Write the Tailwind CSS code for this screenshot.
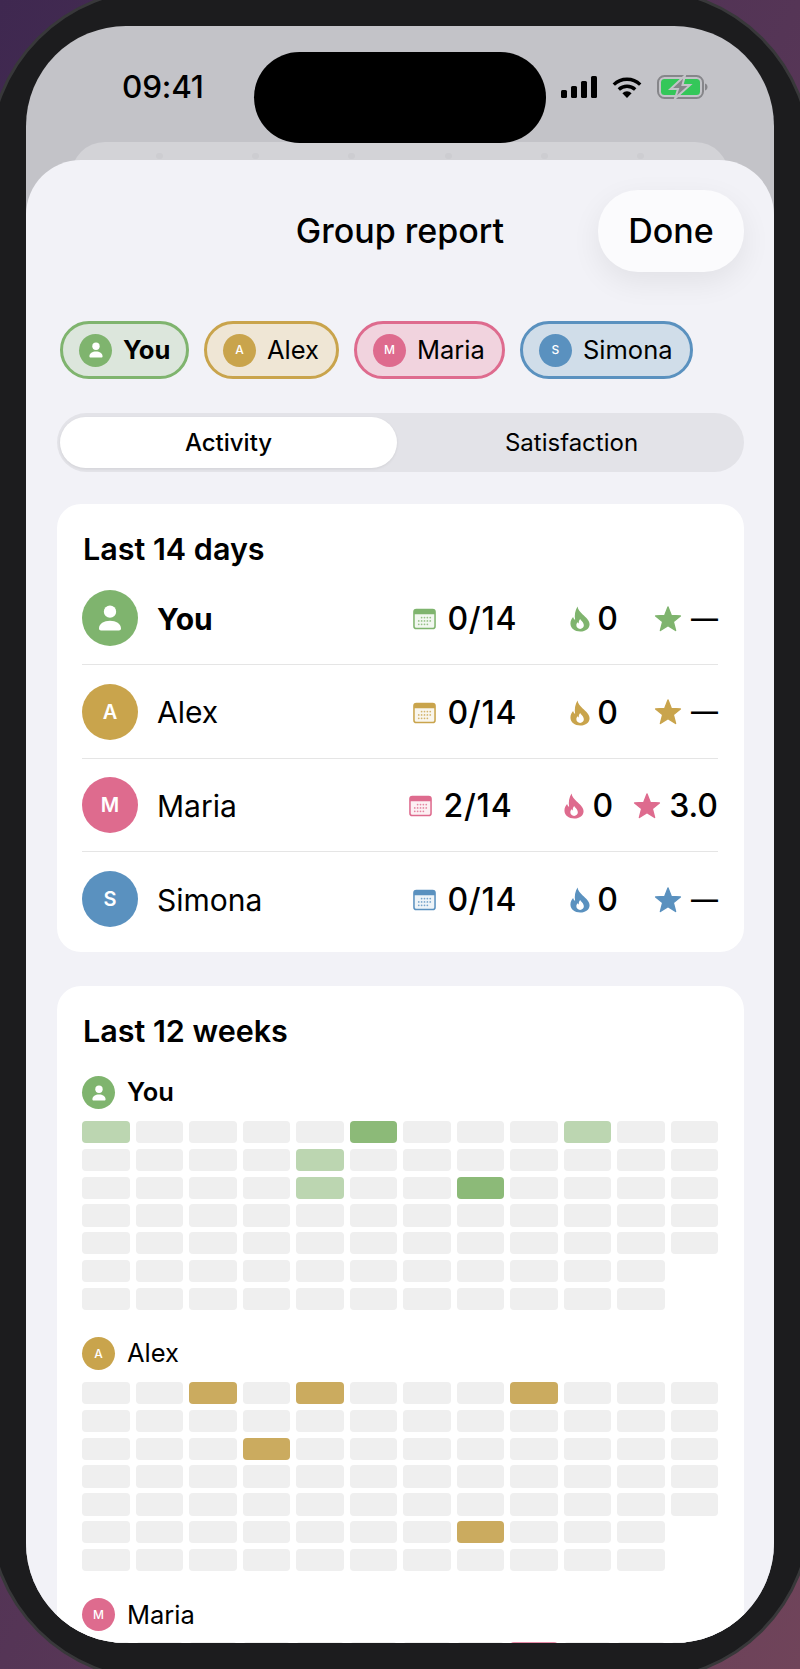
<!DOCTYPE html>
<html lang="en">
<head>
    <meta charset="UTF-8">
    <meta name="viewport" content="width=device-width, initial-scale=1.0">
    <script src="https://cdn.jsdelivr.net/npm/@tailwindcss/browser@4"></script>
    <title>Group report</title>
</head>

<body class="w-[800px] h-[1669px] overflow-hidden bg-linear-to-br from-[#3f2850] via-[#553556] to-[#70445a] font-['Inter','Liberation_Sans',sans-serif] text-black">
    <svg class="hidden">
        <symbol id="person" viewBox="0 0 24 24">
            <circle cx="12" cy="8.2" r="3.7" fill="#fff"></circle>
            <path fill="#fff" d="M5.4 18.3c0-2.900 3-4.700 6.600-4.700s6.600 1.800 6.600 4.700c0 .8-.5 1.200-1.200 1.200H6.600c-.7 0-1.200-.4-1.200-1.200z"></path>
        </symbol>
        <symbol id="calendar" viewBox="0 0 24 22">
            <rect x="1" y="1" width="22" height="20" rx="2.500" fill="currentColor" fill-opacity=".1" stroke="currentColor" stroke-width="1.600"></rect>
            <path fill="currentColor" d="M1 3.500A2.500 2.500 0 0 1 3.500 1h17A2.500 2.500 0 0 1 23 3.500V6H1z"></path>
            <g fill="currentColor" fill-opacity=".8">
                <circle cx="9" cy="9.500" r=".9"></circle><circle cx="12" cy="9.500" r=".9"></circle><circle cx="15" cy="9.500" r=".9"></circle><circle cx="18" cy="9.500" r=".9"></circle>
                <circle cx="6" cy="13" r=".9"></circle><circle cx="9" cy="13" r=".9"></circle><circle cx="12" cy="13" r=".9"></circle><circle cx="15" cy="13" r=".9"></circle><circle cx="18" cy="13" r=".9"></circle>
                <circle cx="6" cy="16.500" r=".9"></circle><circle cx="9" cy="16.500" r=".9"></circle><circle cx="12" cy="16.500" r=".9"></circle><circle cx="15" cy="16.500" r=".9"></circle>
            </g>
        </symbol>
        <symbol id="flame" viewBox="0 0 20 25">
            <path fill="currentColor" d="M7.600.6c.5 3.400 2.500 5.200 5 7.500 3 2.700 6.600 5.600 6.600 9.400 0 4-3.700 7-9 7-5.200 0-9.400-3-9.400-7.700 0-2.800 1.300-4.800 2.600-6.300.3 1.300 1 2.300 1.900 2.800C4.500 9.200 5.400 4 7.600.6z"></path>
            <path fill="#fff" d="M10.200 12.600c.4 1.500 3.500 3 3.500 6 0 2-1.600 3.400-3.600 3.400s-3.600-1.400-3.600-3.400c0-1.300.6-2.200 1.300-2.900.2.500.5.900 1 1.100-.1-1.600.3-3.100 1.400-4.200z"></path>
        </symbol>
        <symbol id="star" viewBox="0 0 28 27">
            <path fill="currentColor" stroke="currentColor" stroke-width="1.400" stroke-linejoin="round" d="M14 1l3.300 8.500 9.100.5-7.100 5.700 2.300 8.800L14 19.600l-7.600 4.900 2.300-8.800L1.600 10l9.100-.5z"></path>
        </symbol>
    </svg>

    <div class="m-[-12px] w-[824px] h-[1693px] rounded-[168px] bg-[#1c1c1e] border-[3px] border-[#38383a] p-[35px]">
        <div class="relative flex flex-col h-[1617px] rounded-[100px] overflow-hidden bg-[#c3c3c8]">
            <!-- dynamic island -->
            <div class="absolute left-[228px] top-[26px] z-10 w-[292px] h-[91px] rounded-[46px] bg-black"></div>

            <div class="flex items-center justify-between h-[116px] shrink-0 pt-[6px] pl-[96px] pr-[66px]">
                <span class="text-[31.500px] font-medium leading-none tracking-[-0.2px]">09:41</span>
                <div class="flex items-center gap-[15px]">
                    <svg width="36" height="22" viewBox="0 0 36 22"><rect x="0" y="14" width="6" height="8" rx="1.500"></rect><rect x="10" y="10" width="6" height="12" rx="1.500"></rect><rect x="20" y="5" width="6" height="17" rx="1.500"></rect><rect x="30" y="0" width="6" height="22" rx="1.500"></rect></svg>
                    <svg width="30" height="21" viewBox="0 0 30 21"><path fill="none" stroke="#000" stroke-width="3.400" d="M1.800 7.600a19 19 0 0 1 26.400 0"></path><path fill="none" stroke="#000" stroke-width="3.400" d="M6.800 12.500a12 12 0 0 1 16.400 0"></path><path d="M15 21l-4.600-4.800a6.600 6.600 0 0 1 9.200 0z"></path></svg>
                    <svg width="51" height="24" viewBox="0 0 51 24">
                        <rect x="1" y="1" width="45" height="22" rx="6.500" fill="none" stroke="#86868a" stroke-width="2"></rect>
                        <rect x="4" y="4" width="39" height="16" rx="3.500" fill="#34c759"></rect>
                        <path d="M48 8.500c1.600.5 2.500 1.800 2.500 3.500s-.9 3-2.500 3.500z" fill="#86868a"></path>
                        <path fill="#86868a" stroke="#c3c3c8" stroke-width="2" d="M28 .5L13.500 14H21l-3 9.500L33 10h-7.500z"></path>
                    </svg>
                </div>
            </div>

            <!-- card peeking behind the sheet -->
            <div class="shrink-0 h-[40px] mx-[45px] -mb-[22px] rounded-t-[34px] bg-[#d3d3d7] flex justify-around px-[40px] pt-[11px]">
                <span class="w-[7px] h-[6px] rounded-full bg-[#cdcdd1]"></span>
                <span class="w-[7px] h-[6px] rounded-full bg-[#cdcdd1]"></span>
                <span class="w-[7px] h-[6px] rounded-full bg-[#cdcdd1]"></span>
                <span class="w-[7px] h-[6px] rounded-full bg-[#cdcdd1]"></span>
                <span class="w-[7px] h-[6px] rounded-full bg-[#cdcdd1]"></span>
                <span class="w-[7px] h-[6px] rounded-full bg-[#cdcdd1]"></span>
            </div>

            <!-- sheet -->
            <div class="relative grow rounded-t-[55px] bg-[#f2f2f7] pt-[30px] pl-[31px] pr-[30px]">
                <div class="relative flex justify-end h-[82px]">
                    <h1 class="absolute inset-0 flex items-center justify-center text-[34px] font-medium pr-[1px] pb-[2px]">Group report</h1>
                    <button class="relative w-[146px] rounded-[40px] bg-[#fbfbfd] shadow-[0_10px_30px_rgba(0,0,0,0.07)] text-[34px] font-medium pb-[2px]">Done</button>
                </div>

                <div class="flex gap-[15px] ml-[3px] mt-[49px]">
                    <div class="flex items-center h-[58px] w-[129px] pl-[16px] gap-[11px] rounded-[29px] border-[3px] border-[#7fb46e] bg-[#dce6dc]">
                        <span class="flex items-center justify-center w-[33px] h-[33px] rounded-full bg-[#7fb46e]"><svg width="24" height="24"><use href="#person"></use></svg></span>
                        <span class="text-[25.500px] font-bold">You</span>
                    </div>
                    <div class="flex items-center h-[58px] w-[135px] pl-[16px] gap-[11px] rounded-[29px] border-[3px] border-[#c9a44c] bg-[#efe6d5]">
                        <span class="flex items-center justify-center w-[33px] h-[33px] rounded-full bg-[#c9a44c] text-white text-[12px] font-medium">A</span>
                        <span class="text-[25.500px]">Alex</span>
                    </div>
                    <div class="flex items-center h-[58px] w-[151px] pl-[16px] gap-[11px] rounded-[29px] border-[3px] border-[#de6b8e] bg-[#f1d3de]">
                        <span class="flex items-center justify-center w-[33px] h-[33px] rounded-full bg-[#de6b8e] text-white text-[12px] font-medium">M</span>
                        <span class="text-[25.500px]">Maria</span>
                    </div>
                    <div class="flex items-center h-[58px] w-[173px] pl-[16px] gap-[11px] rounded-[29px] border-[3px] border-[#5a91bf] bg-[#d0dde9]">
                        <span class="flex items-center justify-center w-[33px] h-[33px] rounded-full bg-[#5a91bf] text-white text-[12px] font-medium">S</span>
                        <span class="text-[25.500px]">Simona</span>
                    </div>
                </div>

                <div class="flex h-[59px] mt-[34px] py-[4px] pl-[3px] pr-[4px] rounded-[30px] bg-[#e3e3e8]">
                    <button class="w-[337px] rounded-[26px] bg-white shadow-[0_1px_3px_rgba(0,0,0,0.08)] text-[24px] font-medium">Activity</button>
                    <button class="grow text-[24px] pl-[6px]">Satisfaction</button>
                </div>

                <section class="mt-[32px] h-[448px] rounded-[24px] bg-white pl-[25px] pr-[26px] pt-[28px]">
                    <h2 class="ml-[1px] text-[30.500px] leading-[34px] font-semibold mb-[6px]">Last 14 days</h2>

                    <div class="flex items-center h-[93px] pt-[2px] border-b border-[#e5e5e5] text-[32px] text-[#7fb46e]">
                        <span class="flex items-center justify-center -mt-[2px] w-[56px] h-[56px] rounded-full bg-[#7fb46e]"><svg width="40" height="40"><use href="#person"></use></svg></span>
                        <span class="grow ml-[19px] text-[30px] font-bold text-black">You</span>
                        <svg class="w-[23px] h-[22px]"><use href="#calendar"></use></svg>
                        <span class="ml-[11px] font-medium tracking-[0.8px] text-black">0/14</span>
                        <svg class="ml-[52px] w-[22px] h-[26px]"><use href="#flame"></use></svg>
                        <span class="ml-[6px] font-medium text-black">0</span>
                        <svg class="ml-[36px] w-[28px] h-[27px]"><use href="#star"></use></svg>
                        <span class="ml-[9px] text-[27px] font-medium text-black">—</span>
                    </div>
                    <div class="flex items-center h-[94px] pt-[2px] border-b border-[#e5e5e5] text-[32px] text-[#c9a44c]">
                        <span class="flex items-center justify-center -mt-[2px] w-[56px] h-[56px] rounded-full bg-[#c9a44c] text-white text-[20px] font-semibold">A</span>
                        <span class="grow ml-[19px] text-[30px] text-black">Alex</span>
                        <svg class="w-[23px] h-[22px]"><use href="#calendar"></use></svg>
                        <span class="ml-[11px] font-medium tracking-[0.8px] text-black">0/14</span>
                        <svg class="ml-[52px] w-[22px] h-[26px]"><use href="#flame"></use></svg>
                        <span class="ml-[6px] font-medium text-black">0</span>
                        <svg class="ml-[36px] w-[28px] h-[27px]"><use href="#star"></use></svg>
                        <span class="ml-[9px] text-[27px] font-medium text-black">—</span>
                    </div>
                    <div class="flex items-center h-[93px] pt-[2px] border-b border-[#e5e5e5] text-[32px] text-[#de6b8e]">
                        <span class="flex items-center justify-center -mt-[2px] w-[56px] h-[56px] rounded-full bg-[#de6b8e] text-white text-[20px] font-semibold">M</span>
                        <span class="grow ml-[19px] text-[30px] text-black">Maria</span>
                        <svg class="w-[23px] h-[22px]"><use href="#calendar"></use></svg>
                        <span class="ml-[11px] font-medium tracking-[0.8px] text-black">2/14</span>
                        <svg class="ml-[51px] w-[22px] h-[26px]"><use href="#flame"></use></svg>
                        <span class="ml-[7px] font-medium text-black">0</span>
                        <svg class="ml-[20px] w-[28px] h-[27px]"><use href="#star"></use></svg>
                        <span class="ml-[8px] font-medium text-black">3.0</span>
                    </div>
                    <div class="flex items-center h-[94px] pt-[2px] text-[32px] text-[#5a91bf]">
                        <span class="flex items-center justify-center -mt-[2px] w-[56px] h-[56px] rounded-full bg-[#5a91bf] text-white text-[20px] font-semibold">S</span>
                        <span class="grow ml-[19px] text-[30px] text-black">Simona</span>
                        <svg class="w-[23px] h-[22px]"><use href="#calendar"></use></svg>
                        <span class="ml-[11px] font-medium tracking-[0.8px] text-black">0/14</span>
                        <svg class="ml-[52px] w-[22px] h-[26px]"><use href="#flame"></use></svg>
                        <span class="ml-[6px] font-medium text-black">0</span>
                        <svg class="ml-[36px] w-[28px] h-[27px]"><use href="#star"></use></svg>
                        <span class="ml-[9px] text-[27px] font-medium text-black">—</span>
                    </div>
                </section>

                <section class="mt-[34px] rounded-[24px] bg-white pl-[25px] pr-[26px] pt-[28px] pb-[40px]">
                    <h2 class="ml-[1px] text-[30.500px] leading-[34px] font-semibold mb-[28px]">Last 12 weeks</h2>

                    <div class="flex items-center gap-[12px] h-[33px] text-[25.500px] font-semibold">
                        <span class="flex items-center justify-center w-[33px] h-[33px] rounded-full bg-[#7fb46e]"><svg width="24" height="24"><use href="#person"></use></svg></span>
                        You
                    </div>
                    <div id="heat-you" class="grid grid-cols-12 gap-x-[6px] gap-y-[5.500px] mt-[12px]"></div>

                    <div class="flex items-center gap-[12px] h-[33px] mt-[27px] text-[25.500px]">
                        <span class="flex items-center justify-center w-[33px] h-[33px] rounded-full bg-[#c9a44c] text-white text-[12px] font-medium">A</span>
                        Alex
                    </div>
                    <div id="heat-alex" class="grid grid-cols-12 gap-x-[6px] gap-y-[5.500px] mt-[12px]"></div>

                    <div class="flex items-center gap-[12px] h-[33px] mt-[27px] text-[25.500px]">
                        <span class="flex items-center justify-center w-[33px] h-[33px] rounded-full bg-[#de6b8e] text-white text-[12px] font-medium">M</span>
                        Maria
                    </div>
                    <div id="heat-maria" class="grid grid-cols-12 gap-x-[6px] gap-y-[5.500px] mt-[11px]"></div>
                </section>
            </div>
        </div>
    </div>

    <script>
        var heat = {
            'heat-you': { 0: 'bg-[#bcd6b1]', 5: 'bg-[#8cba78]', 9: 'bg-[#bcd6b1]', 16: 'bg-[#bcd6b1]', 28: 'bg-[#bcd6b1]', 31: 'bg-[#8cba78]' },
            'heat-alex': { 2: 'bg-[#cbab5f]', 4: 'bg-[#cbab5f]', 8: 'bg-[#cbab5f]', 27: 'bg-[#cbab5f]', 67: 'bg-[#cbab5f]' },
            'heat-maria': { 8: 'bg-[#e58aa6]' }
        };

        // 7 rows of 12 weeks, the last two rows stop one week short
        Object.keys(heat).forEach(function (id) {
            var grid = document.getElementById(id);
            for (var i = 0; i < 83; i++) {
                var cell = document.createElement('div');
                cell.className = 'h-[22.300px] rounded-[4px] ' + (i === 71 ? '' : heat[id][i] || 'bg-[#efefef]');
                grid.appendChild(cell);
            }
        });
    </script>
</body>

</html>
